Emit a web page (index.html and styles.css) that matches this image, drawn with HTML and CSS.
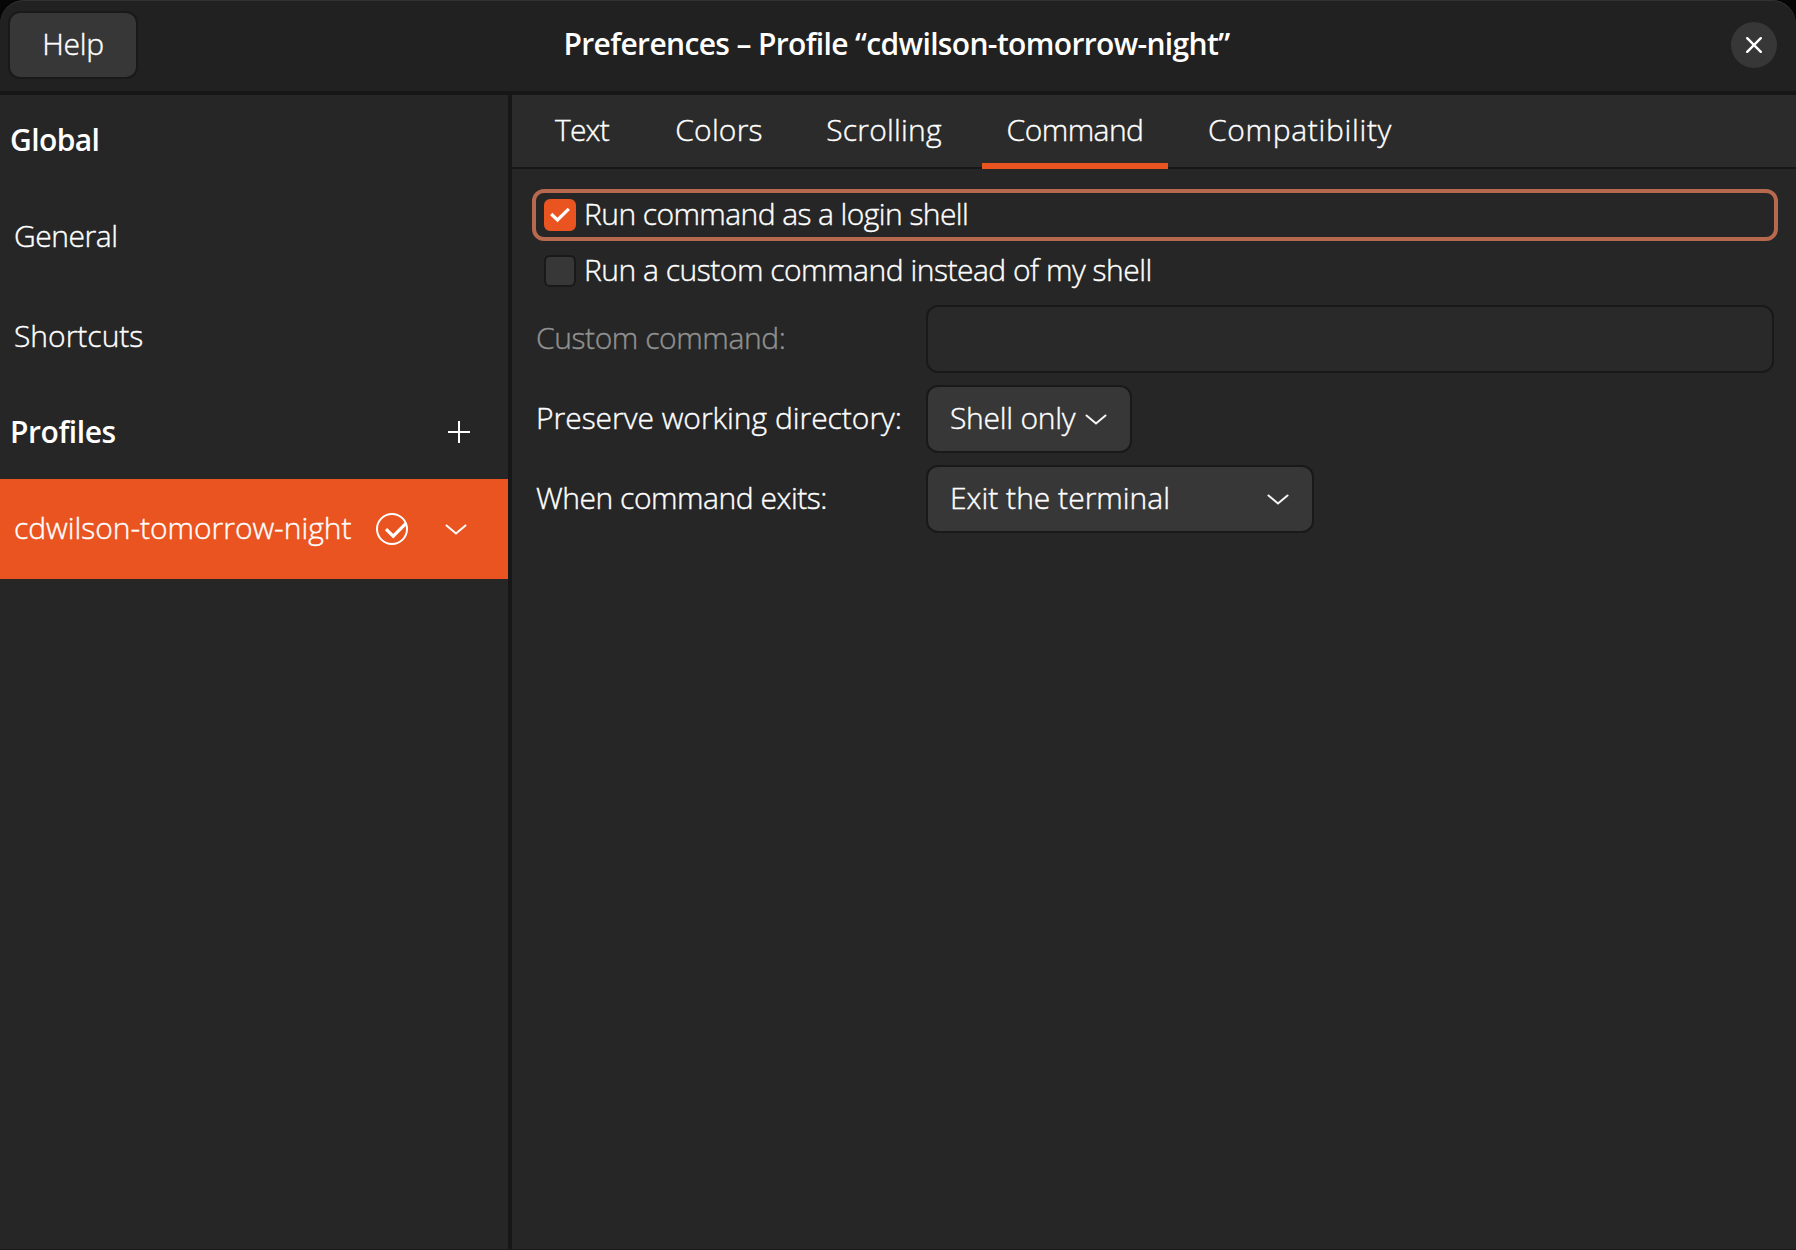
FILE: index.html
```
<!DOCTYPE html>
<html lang="en">
<head>
<meta charset="utf-8">
<title>Preferences – Profile “cdwilson-tomorrow-night”</title>
<link rel="stylesheet" href="styles.css">
</head>
<body>
<div class="window">
  <header class="headerbar">
    <button class="button help"><span class="label t-help">Help</span></button>
    <h1 class="title"><span class="label t-title">Preferences – Profile “cdwilson-tomorrow-night”</span></h1>
    <button class="close" aria-label="Close">
      <svg width="16" height="16" viewBox="0 0 16 16"><path d="M1.2 1.2 14.8 14.8M14.8 1.2 1.2 14.8" stroke="#fff" stroke-width="2.4" fill="none" stroke-linecap="round"/></svg>
    </button>
  </header>
  <div class="content">
    <aside class="sidebar">
      <div class="section"><span class="label t-global">Global</span></div>
      <div class="row"><span class="label t-general">General</span></div>
      <div class="row"><span class="label t-shortcuts">Shortcuts</span></div>
      <div class="section">
        <span class="label t-profiles">Profiles</span>
        <svg class="add" width="22" height="22" viewBox="0 0 22 22"><path d="M11 0V22M0 11H22" stroke="#fff" stroke-width="2" fill="none"/></svg>
      </div>
      <div class="row selected">
        <span class="label t-profile">cdwilson-tomorrow-night</span>
        <svg class="default-mark" width="32" height="32" viewBox="0 0 32 32" fill="none" stroke="#fff"><circle cx="16" cy="16" r="15" stroke-width="2"/><path d="M10 16.2 17.2 23.2 30 10.4" stroke-width="3.2"/></svg>
        <svg class="expand" width="22" height="12" viewBox="0 0 22 12"><path d="M1.5 1.5 11 9.5 20.5 1.5" stroke="#fff" stroke-width="2" fill="none" stroke-linecap="round"/></svg>
      </div>
    </aside>
    <main class="pane">
      <nav class="tabs">
        <div class="tab tab-text"><span class="label t-text">Text</span></div>
        <div class="tab tab-colors"><span class="label t-colors">Colors</span></div>
        <div class="tab tab-scrolling"><span class="label t-scrolling">Scrolling</span></div>
        <div class="tab tab-command active"><span class="label t-command">Command</span></div>
        <div class="tab tab-compat"><span class="label t-compat">Compatibility</span></div>
      </nav>
      <div class="form">
        <div class="check focused">
          <span class="box checked"><svg width="20" height="16" viewBox="0 0 20 16"><path d="M1.2 7 7.5 13 18.8 1.8" stroke="#fff" stroke-width="3.2" fill="none"/></svg></span>
          <span class="label t-login">Run command as a login shell</span>
        </div>
        <div class="check">
          <span class="box"></span>
          <span class="label t-custom">Run a custom command instead of my shell</span>
        </div>
        <div class="grid">
          <span class="label disabled t-cc">Custom command:</span>
          <div class="entry"></div>
          <span class="label t-pwd">Preserve working directory:</span>
          <button class="button combo combo-shell"><span class="label t-shell">Shell only</span>
            <svg width="22" height="12" viewBox="0 0 22 12"><path d="M1.5 1.5 11 9.5 20.5 1.5" stroke="#f7f7f7" stroke-width="2" fill="none" stroke-linecap="round"/></svg></button>
          <span class="label t-when">When command exits:</span>
          <button class="button combo combo-exit"><span class="label t-exit">Exit the terminal</span>
            <svg width="22" height="12" viewBox="0 0 22 12"><path d="M1.5 1.5 11 9.5 20.5 1.5" stroke="#f7f7f7" stroke-width="2" fill="none" stroke-linecap="round"/></svg></button>
        </div>
      </div>
    </main>
  </div>
</div>
</body>
</html>
```
FILE: styles.css
```
* { box-sizing: border-box; }
body { margin: 0; background: #060606; }
.window {
  width: 1796px; height: 1250px;
  display: flex; flex-direction: column;
  background: #262626; color: #fff;
  border-radius: 24px 24px 0 0;
  border-bottom: 1px solid #191919;
  overflow: hidden;
  font: 300 30px/40px "Open Sans", "Noto Sans", sans-serif;
}
.label {
  display: block; white-space: nowrap; padding-bottom: 3px; line-height: 40px;
  -webkit-text-stroke: .4px currentColor;
}
.headerbar {
  height: 95px; flex: none;
  display: grid; grid-template-columns: 130px 1fr 130px; align-items: center;
  padding: 0 19px 1px 8px;
  background: #212121;
  border-bottom: 4px solid #171717;
  border-radius: 24px 24px 0 0;
  box-shadow: inset 0 1px 0 #323232;
}
.button {
  display: flex; align-items: center;
  height: 68px; padding: 0;
  background: #373737; color: #fff;
  border: 2px solid #191919; border-radius: 12px;
  font: inherit;
}
.help { justify-content: center; }
.title { margin: 0; font: inherit; font-weight: 600; display: flex; justify-content: center; padding-left: 8px; }
.close {
  justify-self: end; width: 46px; height: 46px; padding: 0;
  display: flex; align-items: center; justify-content: center;
  border: 0; border-radius: 50%; background: #373737;
}
.content { flex: 1; display: flex; min-height: 0; }
.sidebar { width: 512px; flex: none; border-right: 4px solid #171717; }
.section {
  height: 92px; display: flex; align-items: center; justify-content: space-between;
  padding: 0 38px 0 10px; font-weight: 600;
}
.title .label, .section .label { -webkit-text-stroke: 0; }
.add { margin-bottom: 2px; }
.row { height: 100px; display: flex; align-items: center; padding-left: 14px; }
.selected { background: #e95420; padding-right: 41px; }
.default-mark { margin-left: auto; margin-right: 37px; }
.expand { margin-top: 2px; }
.pane { flex: 1; display: flex; flex-direction: column; }
.tabs {
  height: 74px; flex: none; display: flex; padding-left: 17px;
  background: #2b2b2b; border-bottom: 2px solid #171717;
}
.tab { height: 74px; display: flex; align-items: center; justify-content: center; padding-bottom: 2px; }
.tab-text { width: 106px; }
.tab-colors { width: 168px; }
.tab-scrolling { width: 162px; }
.tab-command { width: 186px; margin-left: 17px; }
.tab-compat { width: 232px; margin-left: 16px; }
.active { box-shadow: inset 0 -6px 0 #e95420; }
.form { padding: 20px 18px 0 20px; display: flex; flex-direction: column; }
.check { display: flex; align-items: center; gap: 8px; height: 52px; padding-left: 12px; }
.check + .check { margin: 4px 0; }
.focused { border: 4px solid #b6694f; border-radius: 12px; padding-left: 8px; }
.box {
  width: 32px; height: 32px; flex: none; display: flex; align-items: center; justify-content: center;
  background: #373737; border: 2px solid #191919; border-radius: 6px;
}
.checked { background: #e95420; border-color: #e95420; }
.grid {
  display: grid; grid-template-columns: 390px 1fr; row-gap: 12px; align-items: center;
  margin-top: 4px; padding: 0 4px 0 4px;
}
.entry { height: 68px; background: #292929; border: 2px solid #191919; border-radius: 12px; }
.disabled { color: #919191; }
.combo { justify-content: space-between; padding: 0 23px 0 22px; }
.combo svg { margin-top: 2px; }
.combo-shell { width: 206px; }
.combo-exit { width: 388px; }

.t-help { letter-spacing: -.3px; }
.t-title { letter-spacing: -.65px; }
.t-global { letter-spacing: -.6px; }
.t-general { letter-spacing: -.45px; }
.t-profiles { letter-spacing: -.44px; }
.t-profile { letter-spacing: -.03px; }
.t-text { letter-spacing: -.8px; }
.t-colors { letter-spacing: .2px; }
.t-scrolling { letter-spacing: .24px; }
.t-command { letter-spacing: -.55px; }
.t-compat { letter-spacing: .68px; }
.t-login { letter-spacing: -.58px; }
.t-custom { letter-spacing: -.49px; }
.t-cc { letter-spacing: -.42px; }
.t-pwd { letter-spacing: -.02px; }
.t-when { letter-spacing: -.47px; }
.t-shell { letter-spacing: -.25px; }
.t-exit { letter-spacing: 0; }
```
